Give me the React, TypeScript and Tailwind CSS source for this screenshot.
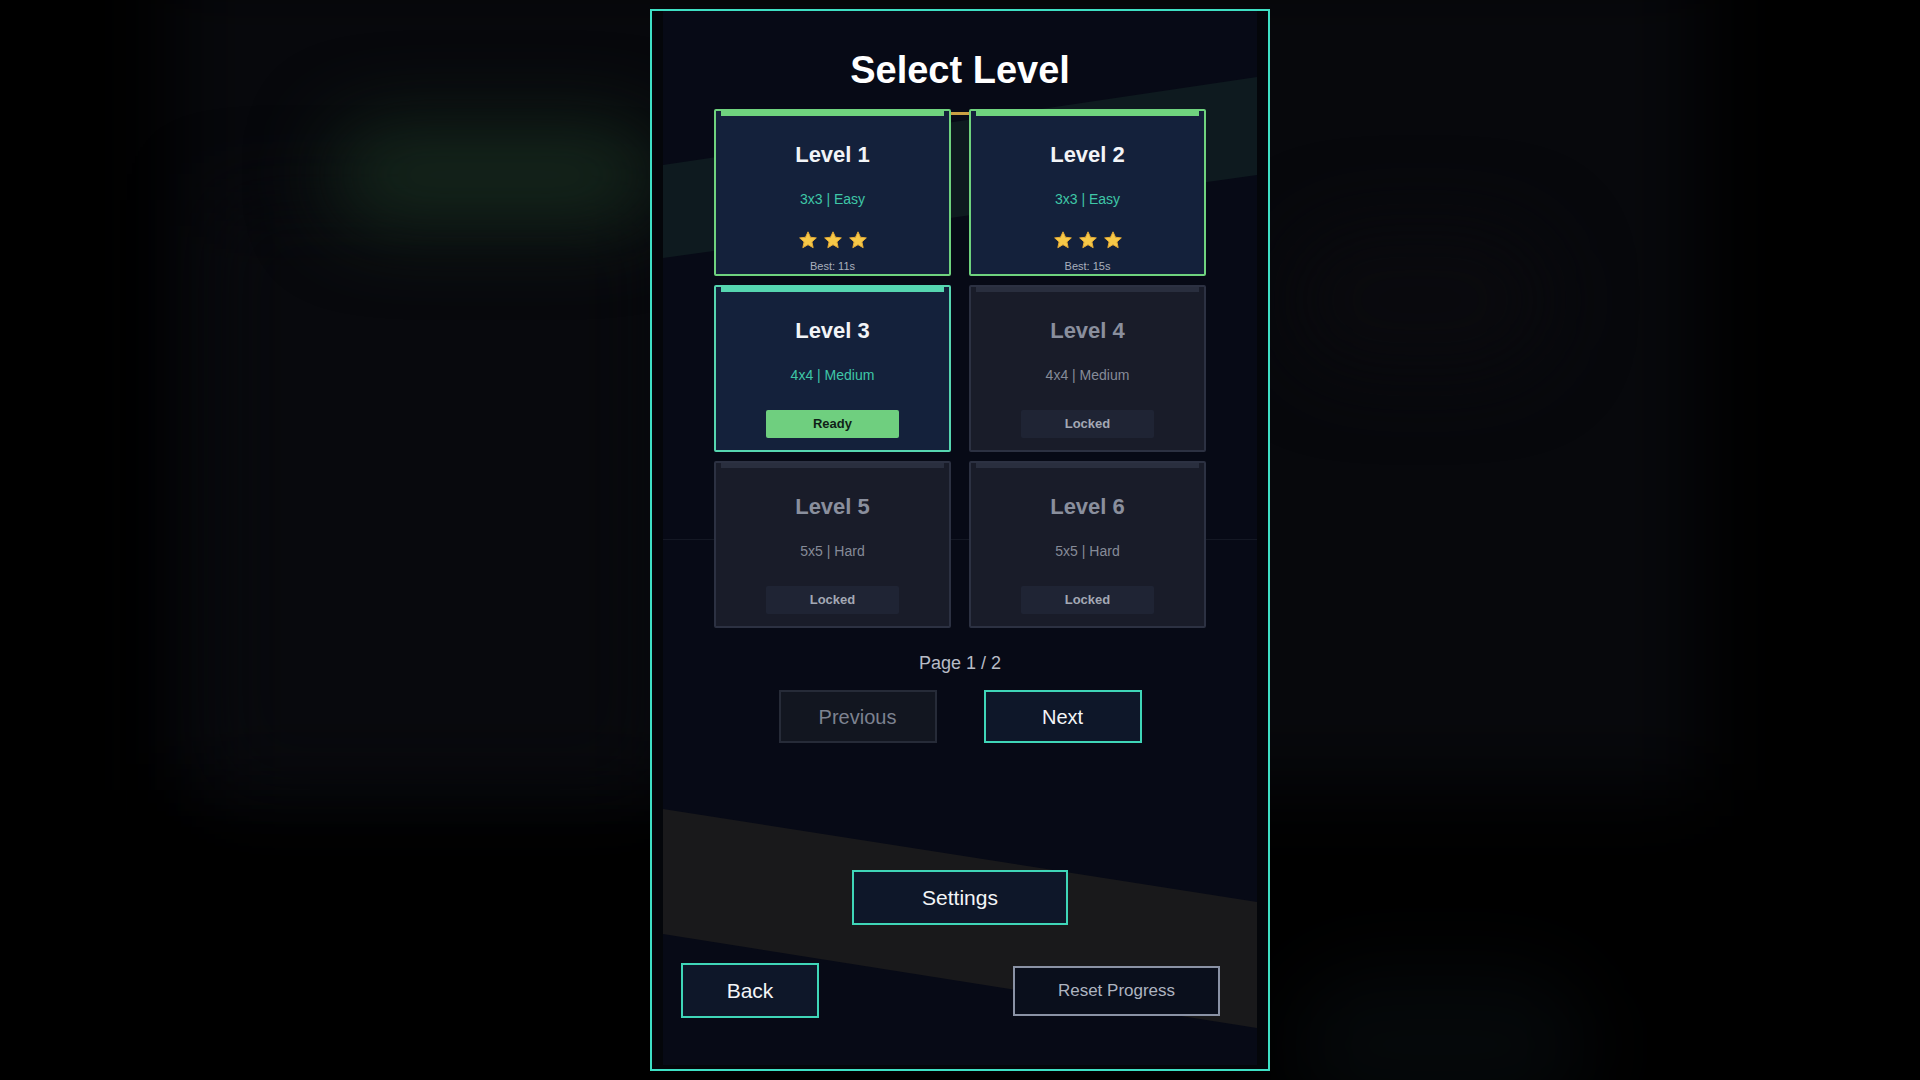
import React from "react";

type LevelState = "done" | "current" | "locked";

interface Level {
  n: number;
  sub: string;
  state: LevelState;
  best?: string;
}

const levels: Level[] = [
  { n: 1, sub: "3x3 | Easy", state: "done", best: "Best: 11s" },
  { n: 2, sub: "3x3 | Easy", state: "done", best: "Best: 15s" },
  { n: 3, sub: "4x4 | Medium", state: "current" },
  { n: 4, sub: "4x4 | Medium", state: "locked" },
  { n: 5, sub: "5x5 | Hard", state: "locked" },
  { n: 6, sub: "5x5 | Hard", state: "locked" },
];

function Star() {
  return (
    <svg width="20" height="20" viewBox="0 0 24 24" aria-hidden="true">
      <path
        d="M12 2.2l2.95 6.5 7.05.75-5.3 4.8 1.5 6.95L12 17.6l-6.2 3.6 1.5-6.95-5.3-4.8 7.05-.75z"
        fill="#f7c948"
        stroke="#e3a935"
        strokeWidth="1.2"
        strokeLinejoin="round"
      />
    </svg>
  );
}

function LevelCard({ level }: { level: Level }) {
  const locked = level.state === "locked";
  const border =
    level.state === "done"
      ? "border-[#6fd37e]"
      : level.state === "current"
      ? "border-[#56d6b0]"
      : "border-[#2c3142]";
  const bar =
    level.state === "done"
      ? "bg-[#6fd37e]"
      : level.state === "current"
      ? "bg-[#56d6b0]"
      : "bg-[#292e3e]";
  const bg = locked ? "bg-[#191c29]" : "bg-[#14213b]";
  return (
    <div
      className={`h-[167px] w-[237px] rounded-[2px] border-[2.5px] ${border} ${bg} flex flex-col items-center overflow-hidden`}
    >
      <div className={`h-[5px] self-stretch mx-[5px] ${bar}`} />
      <div
        className={`mt-[26px] text-[22px] leading-[26px] font-bold ${
          locked ? "text-[#8a8f9d]" : "text-[#f2f4f7]"
        }`}
      >
        Level {level.n}
      </div>
      <div
        className={`mt-[23px] text-[14px] leading-[16px] ${
          locked ? "text-[#868b98]" : "text-[#3fc7a7]"
        }`}
      >
        {level.sub}
      </div>
      {level.state === "done" && (
        <>
          <div className="mt-[23px] flex gap-[5px]">
            <Star />
            <Star />
            <Star />
          </div>
          <div className="mt-[10px] text-[11px] leading-[13px] text-[#aab0bd]">
            {level.best}
          </div>
        </>
      )}
      {level.state === "current" && (
        <div className="mt-[27px] h-[28px] w-[133px] rounded-[2px] bg-[#6fcf7f] flex items-center justify-center text-[13px] font-bold text-[#0f1f18]">
          Ready
        </div>
      )}
      {locked && (
        <div className="mt-[27px] h-[28px] w-[133px] rounded-[2px] bg-[#1f2434] flex items-center justify-center text-[13px] font-bold text-[#a3a8b4]">
          Locked
        </div>
      )}
    </div>
  );
}

export default function App() {
  return (
    <div className="relative h-[1080px] w-full overflow-hidden bg-black font-['Liberation_Sans',Arial,sans-serif]">
      {/* blurred background scene */}
      <div className="pointer-events-none absolute inset-0">
        <div className="absolute left-[170px] top-[-40px] h-[830px] w-[1530px] bg-[#07080c] blur-2xl" />
        <div className="absolute left-[215px] top-[200px] h-[590px] w-[440px] bg-[#08090d] blur-2xl" />
        <div className="absolute left-[330px] top-[125px] h-[100px] w-[330px] rounded-full bg-[#15271c] blur-2xl" />
        <div className="absolute left-[1290px] top-[230px] h-[140px] w-[260px] rounded-full bg-[#0a0a0e] blur-2xl" />
        <div className="absolute left-[1290px] top-[970px] h-[150px] w-[300px] rounded-full bg-[#05080a] blur-2xl" />
      </div>

      <div className="relative flex justify-center pt-[9px]">
        <div className="h-[1062px] w-[620px] border-2 border-[#3ee0c4] bg-[#04060a] px-[11px] pb-[4px]">
          <div className="relative flex h-full flex-col items-center overflow-hidden bg-[#070a16]">
            {/* decorative diagonal bands */}
            <svg
              className="pointer-events-none absolute inset-0"
              width="594"
              height="1054"
              viewBox="0 0 594 1054"
              aria-hidden="true"
            >
              <polygon points="0,154 594,66 594,164 0,247" fill="#0e1a1f" />
              <polygon points="0,798 594,891 594,1017 0,923" fill="#19191b" />
              <rect x="0" y="528" width="594" height="1" fill="#141824" />
            </svg>

            <h1 className="relative mt-[38px] text-[38px] leading-[42px] font-bold text-white">
              Select Level
            </h1>

            <div className="relative mt-[18px] grid grid-cols-[237px_237px] gap-x-[18px] gap-y-[9px]">
              <div className="absolute left-[237px] top-[3px] h-[3px] w-[18px] bg-[#c9a043]" />
              {levels.map((l) => (
                <LevelCard key={l.n} level={l} />
              ))}
            </div>

            <div className="relative mt-[25px] text-[18px] leading-[20px] text-[#b8bcc6]">
              Page 1 / 2
            </div>

            <div className="relative mt-[17px] flex gap-[47px]">
              <button className="h-[53px] w-[158px] border-2 border-[#262b38] bg-[#121620] text-[20px] text-[#7d8290]">
                Previous
              </button>
              <button className="h-[53px] w-[158px] border-2 border-[#3fd6b8] bg-[#0e1729] text-[20px] text-[#f3f5f7]">
                Next
              </button>
            </div>

            <button className="relative mt-[127px] h-[55px] w-[216px] border-2 border-[#3fd6b8] bg-[#0e1729] text-[21px] text-[#f3f5f7]">
              Settings
            </button>

            <div className="relative mt-[38px] flex w-full items-center justify-between pl-[18px] pr-[37px]">
              <button className="h-[55px] w-[138px] border-2 border-[#3fd6b8] bg-[#0e1729] text-[21px] text-[#f3f5f7]">
                Back
              </button>
              <button className="h-[50px] w-[207px] border-2 border-[#8a92a5] bg-[#0a0f1c] text-[17px] text-[#aeb4c0]">
                Reset Progress
              </button>
            </div>
          </div>
        </div>
      </div>
    </div>
  );
}
